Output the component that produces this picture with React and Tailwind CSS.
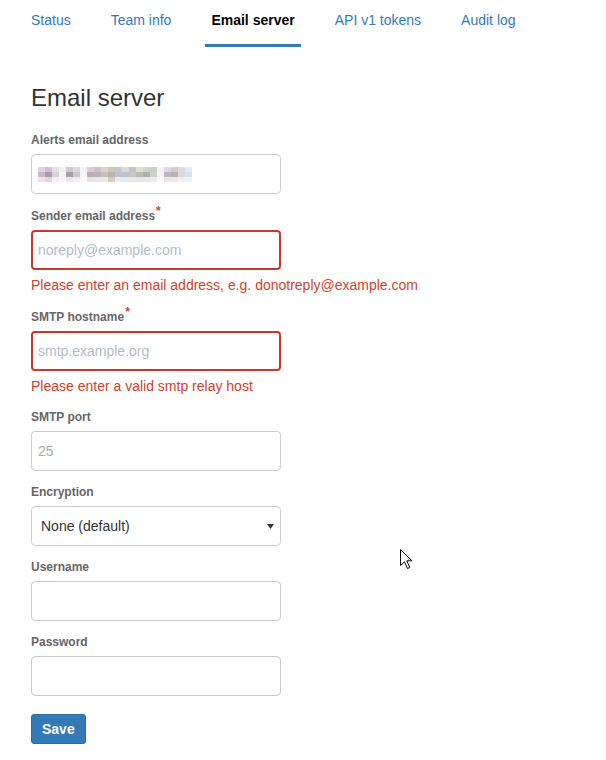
import React from "react";

const blurPixels = [
  "#ddd8dd","#c9c3cc","#e4e0e4","#f0eef0","#cfc9cf","#d9d9de","#f4f2f4","#d6cfd4","#c8c4c8","#d9d2d2","#cbc8c2","#c9c9cc","#dad6da","#c2c4c8","#e2ddd9","#d2d2cf","#c9d0c9","#f2f2f2","#dcd8de","#d3cfd0","#e0dcdc","#e6eaf2",
  "#c9b8c4","#a99ab0","#d6d2d6","#f6f4f6","#a89ea8","#c8c8c8","#f4f4f4","#b8aeb6","#bdb3b8","#c5c1b8","#b8b4ae","#c3bfcc","#b9c2cf","#c8c8c0","#b8bcb4","#a8b4a8","#cfd2cc","#f4f4f4","#c0b8c0","#b8b2b0","#dcd8dc","#d8e2ee",
  "#e8e4e8","#dcd8dc","#f2f0f2","#fafafa","#ece6ec","#eeeeee","#fafafa","#e6e2e6","#e8e6e8","#ece8e4","#d2ccc8","#ece8ec","#e8ecf0","#ece8e4","#e6e4e4","#e6e8e6","#eeeeee","#fafafa","#ebe6ec","#ece8ea","#f2f0f0","#eef2f8",
];

function Blur() {
  const cols = 22;
  const w = 7;
  const h = 5;
  return (
    <svg width={cols * w} height={3 * h} className="block">
      {blurPixels.map((c, i) => (
        <rect key={i} x={(i % cols) * w} y={Math.floor(i / cols) * h} width={w} height={h} fill={c} />
      ))}
    </svg>
  );
}

function Label({ children, required }) {
  return (
    <div className="text-[12px] leading-[16px] font-bold text-[#666] mb-[6px]">
      {children}
      {required && <span className="text-[#d03f2e] relative -top-[5px] ml-[1px]">*</span>}
    </div>
  );
}

function Input({ placeholder, error, children }) {
  return (
    <div
      className={
        "w-[250px] h-[40px] rounded-[4px] bg-white flex items-center " +
        (error ? "border-2 border-[#c9392b] pl-[5px]" : "border border-[#cccccc] pl-[6px]")
      }
    >
      {placeholder && <span className="text-[14px] text-[#b3bcc8]">{placeholder}</span>}
      {children}
    </div>
  );
}

function Err({ children }) {
  return <div className="mt-[5px] text-[14px] leading-[20px] text-[#d03f2e]">{children}</div>;
}

export default function App() {
  const tabs = ["Status", "Team info", "Email server", "API v1 tokens", "Audit log"];
  return (
    <div className="relative w-[606px] h-[760px] bg-white overflow-hidden font-['Liberation_Sans',Arial,sans-serif] text-[14px] text-[#333]">
      <nav className="flex pl-[25px] gap-[28px] h-[47px]">
        {tabs.map((t) => (
          <div
            key={t}
            className={
              "px-[6px] pt-[10px] leading-[20px] h-[47px] " +
              (t === "Email server"
                ? "font-bold text-black border-b-[3px] border-[#337ab7]"
                : "text-[#337ab7]")
            }
          >
            {t}
          </div>
        ))}
      </nav>

      <div className="px-[31px]">
        <h3 className="mt-[38px] text-[24px] leading-[26px] text-[#333] font-normal">Email server</h3>

        <div className="mt-[21px] flex flex-col">
          <Label>Alerts email address</Label>
          <Input>
            <Blur />
          </Input>

          <div className="mt-[14px]">
            <Label required>Sender email address</Label>
            <Input placeholder="noreply@example.com" error />
            <Err>Please enter an email address, e.g. donotreply@example.com</Err>
          </div>

          <div className="mt-[14px]">
            <Label required>SMTP hostname</Label>
            <Input placeholder="smtp.example.org" error />
            <Err>Please enter a valid smtp relay host</Err>
          </div>

          <div className="mt-[13px]">
            <Label>SMTP port</Label>
            <Input>
              <span className="text-[14px] text-[#aaaaaa]">25</span>
            </Input>
          </div>

          <div className="mt-[13px]">
            <Label>Encryption</Label>
            <div className="w-[250px] h-[40px] rounded-[4px] border border-[#cccccc] bg-white flex items-center justify-between pl-[9px] pr-[6px]">
              <span className="text-[14px] text-[#333]">None (default)</span>
              <svg width="7" height="5" viewBox="0 0 7 5" className="block">
                <path d="M0 0 L7 0 L3.5 5 Z" fill="#333" />
              </svg>
            </div>
          </div>

          <div className="mt-[13px]">
            <Label>Username</Label>
            <Input />
          </div>

          <div className="mt-[13px]">
            <Label>Password</Label>
            <Input />
          </div>

          <div className="mt-[18px]">
            <button className="h-[30px] px-[10px] rounded-[3px] bg-[#337ab7] text-white font-bold text-[14px] border border-[#2e6da4]">
              Save
            </button>
          </div>
        </div>
      </div>

      <svg className="absolute left-[400px] top-[549px]" width="14" height="22" viewBox="0 0 14 22">
        <path d="M0.5 0.5 L0.5 16.5 L4.5 12.8 L7.5 19.5 L9.8 18.5 L6.8 11.8 L12 11.8 Z" fill="#fff" stroke="#000" strokeWidth="1" strokeLinejoin="round" />
      </svg>
    </div>
  );
}
